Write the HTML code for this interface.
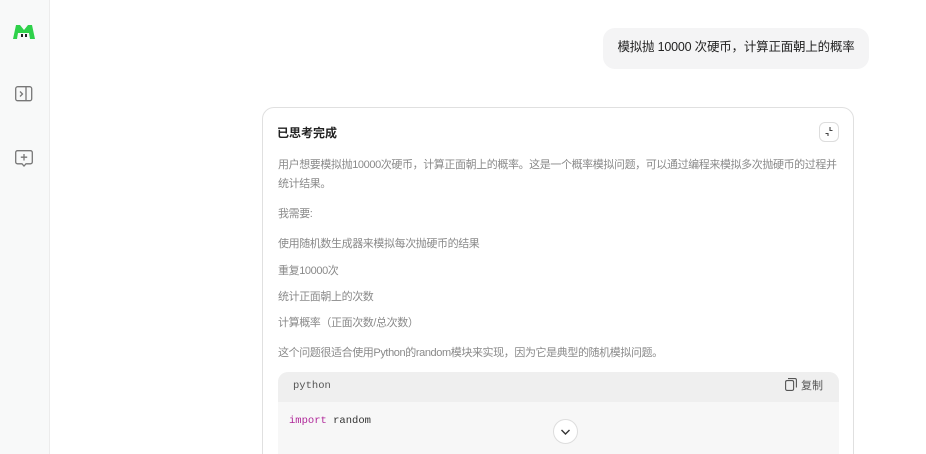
<!DOCTYPE html>
<html><head><meta charset="utf-8"><style>
*{margin:0;padding:0;box-sizing:border-box}
html,body{width:926px;height:454px;overflow:hidden}
body{background:#fff;font-family:"Liberation Sans","Noto Sans CJK SC",sans-serif;position:relative}
.side{position:absolute;left:0;top:0;width:50px;height:454px;background:#f8f9f9;border-right:1px solid #ececec}
.bubble{position:absolute;left:603px;top:28px;width:266px;height:41px;background:#f4f4f5;border-radius:12px;font-size:12.5px;letter-spacing:-0.2px;color:#222;line-height:39px;text-align:center}
.card{position:absolute;left:262px;top:107px;width:592px;height:360px;border:1px solid #e0e0e0;border-radius:12px;background:#fff}
.title{position:absolute;left:14px;top:16px;font-size:12px;font-weight:bold;color:#222}
.btn{position:absolute;left:556px;top:14px;width:20px;height:20px;border:1px solid #ddd;border-radius:6px}
.t{position:absolute;left:15px;font-size:11px;letter-spacing:-0.4px;color:#8a8a8a;white-space:nowrap;margin-top:-2px}
.code{position:absolute;left:15px;top:264px;width:561px;height:100px;background:#f7f7f7;border-radius:10px;overflow:hidden}
.ch{height:30px;background:#efefef;font-family:"Liberation Mono",monospace;font-size:10.5px;color:#555;line-height:28px;padding-left:15px;position:relative}
.cp{position:absolute;right:16px;top:0;font-family:"Liberation Sans","Noto Sans CJK SC",sans-serif;font-size:11px;color:#555}
.cb{font-family:"Liberation Mono",monospace;font-size:10.5px;color:#333;padding:13px 0 0 11px}
.down{position:absolute;left:553px;top:419px;width:25px;height:25px;border:1px solid #ddd;border-radius:50%;background:#fff}
</style></head><body>
<div class="side">
<svg style="position:absolute;left:12px;top:24px" width="24" height="16" viewBox="0 0 24 16"><path d="M1 15 L4 1 L8 1 L12 6 L16 1 L20 1 L23 15 L18 15 L17 9 L6 9 L5 15 Z" fill="#2ed14a"/><rect x="9" y="10" width="2" height="3" fill="#222"/><rect x="13" y="10" width="2" height="3" fill="#222"/></svg>
<svg style="position:absolute;left:15px;top:86px" width="18" height="16" viewBox="0 0 18 16"><rect x="0.7" y="0.7" width="16" height="14" rx="2" fill="none" stroke="#777" stroke-width="1.3"/><line x1="11" y1="1" x2="11" y2="15" stroke="#777" stroke-width="1.3"/><path d="M5 5.5 L7.5 8 L5 10.5" fill="none" stroke="#777" stroke-width="1.3"/></svg>
<svg style="position:absolute;left:15px;top:150px" width="18" height="18" viewBox="0 0 18 18"><path d="M2.5 0.7 H15.5 A1.8 1.8 0 0 1 17.3 2.5 V12 A1.8 1.8 0 0 1 15.5 13.8 H11 L9 16 L7 13.8 H2.5 A1.8 1.8 0 0 1 0.7 12 V2.5 A1.8 1.8 0 0 1 2.5 0.7 Z" fill="none" stroke="#777" stroke-width="1.3"/><path d="M9 4 V10.5 M5.8 7.2 H12.2" stroke="#777" stroke-width="1.3"/></svg>
</div>
<div class="bubble">模拟抛 10000 次硬币，计算正面朝上的概率</div>
<div class="card">
<div class="title">已思考完成</div>
<div class="btn"><svg width="18" height="18" viewBox="0 0 18 18"><path d="M10 4 V7.5 H12.5 M5.5 10.5 H8 V13" fill="none" stroke="#444" stroke-width="1.1"/></svg></div>
<div class="t" style="top:50px">用户想要模拟抛10000次硬币，计算正面朝上的概率。这是一个概率模拟问题，可以通过编程来模拟多次抛硬币的过程并</div>
<div class="t" style="top:69px">统计结果。</div>
<div class="t" style="top:99px">我需要:</div>
<div class="t" style="top:129px">使用随机数生成器来模拟每次抛硬币的结果</div>
<div class="t" style="top:156px">重复10000次</div>
<div class="t" style="top:182px">统计正面朝上的次数</div>
<div class="t" style="top:208px">计算概率（正面次数/总次数）</div>
<div class="t" style="top:238px">这个问题很适合使用Python的random模块来实现，因为它是典型的随机模拟问题。</div>
<div class="code"><div class="ch">python<span class="cp"><svg width="12" height="13" viewBox="0 0 12 13" style="vertical-align:-2px;margin-right:4px"><rect x="0.6" y="2.6" width="8" height="9.8" rx="1.5" fill="none" stroke="#555" stroke-width="1.1"/><path d="M3 0.6 H10 A1.4 1.4 0 0 1 11.4 2 V9.5" fill="none" stroke="#555" stroke-width="1.1"/></svg>复制</span></div>
<div class="cb"><span style="color:#b0299a">import</span> random</div></div>
</div>
<div class="down"><svg width="23" height="23" viewBox="0 0 23 23"><path d="M7.5 10 L11.5 14 L15.5 10" fill="none" stroke="#333" stroke-width="1.4"/></svg></div>
</body></html>
